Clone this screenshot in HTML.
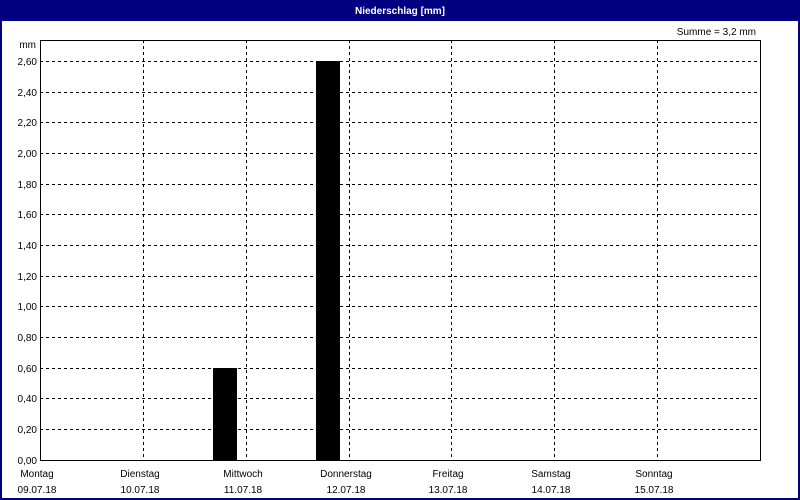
<!DOCTYPE html>
<html><head><style>
html,body{margin:0;padding:0;background:#fff}
svg{display:block}
text{font-family:"Liberation Sans",sans-serif;font-size:10px;fill:#000}
</style></head><body>
<svg width="800" height="500" xmlns="http://www.w3.org/2000/svg">
<rect x="0" y="0" width="800" height="500" fill="#000080"/>
<rect x="2" y="21" width="796" height="477" fill="#fff"/>
<text x="400" y="14" text-anchor="middle" style="fill:#fff;font-weight:bold;font-size:10px">Niederschlag [mm]</text>
<text x="756" y="35" text-anchor="end">Summe = 3,2 mm</text>
<text x="36" y="48" text-anchor="end">mm</text>
<g stroke="#000" stroke-width="1" stroke-dasharray="3,3">
<line x1="40" y1="61.5" x2="760" y2="61.5"/>
<line x1="40" y1="92.5" x2="760" y2="92.5"/>
<line x1="40" y1="122.5" x2="760" y2="122.5"/>
<line x1="40" y1="153.5" x2="760" y2="153.5"/>
<line x1="40" y1="184.5" x2="760" y2="184.5"/>
<line x1="40" y1="214.5" x2="760" y2="214.5"/>
<line x1="40" y1="245.5" x2="760" y2="245.5"/>
<line x1="40" y1="276.5" x2="760" y2="276.5"/>
<line x1="40" y1="306.5" x2="760" y2="306.5"/>
<line x1="40" y1="337.5" x2="760" y2="337.5"/>
<line x1="40" y1="368.5" x2="760" y2="368.5"/>
<line x1="40" y1="398.5" x2="760" y2="398.5"/>
<line x1="40" y1="429.5" x2="760" y2="429.5"/>
<line x1="143.5" y1="40" x2="143.5" y2="460"/>
<line x1="246.5" y1="40" x2="246.5" y2="460"/>
<line x1="349.5" y1="40" x2="349.5" y2="460"/>
<line x1="451.5" y1="40" x2="451.5" y2="460"/>
<line x1="554.5" y1="40" x2="554.5" y2="460"/>
<line x1="657.5" y1="40" x2="657.5" y2="460"/>
</g>
<rect x="213" y="368" width="24" height="92" fill="#000"/>
<rect x="316" y="61" width="24" height="399" fill="#000"/>
<rect x="40.5" y="40.5" width="720" height="420" fill="none" stroke="#000"/>
<g text-anchor="end">
<text x="37" y="65">2,60</text><text x="37" y="96">2,40</text><text x="37" y="126">2,20</text>
<text x="37" y="157">2,00</text><text x="37" y="188">1,80</text><text x="37" y="218">1,60</text>
<text x="37" y="249">1,40</text><text x="37" y="280">1,20</text><text x="37" y="310">1,00</text>
<text x="37" y="341">0,80</text><text x="37" y="372">0,60</text><text x="37" y="402">0,40</text>
<text x="37" y="433">0,20</text><text x="37" y="464">0,00</text>
</g>
<g text-anchor="middle">
<text x="37" y="477">Montag</text><text x="37" y="493">09.07.18</text>
<text x="140" y="477">Dienstag</text><text x="140" y="493">10.07.18</text>
<text x="243" y="477">Mittwoch</text><text x="243" y="493">11.07.18</text>
<text x="346" y="477">Donnerstag</text><text x="346" y="493">12.07.18</text>
<text x="448" y="477">Freitag</text><text x="448" y="493">13.07.18</text>
<text x="551" y="477">Samstag</text><text x="551" y="493">14.07.18</text>
<text x="654" y="477">Sonntag</text><text x="654" y="493">15.07.18</text>
</g>
</svg>
</body></html>
